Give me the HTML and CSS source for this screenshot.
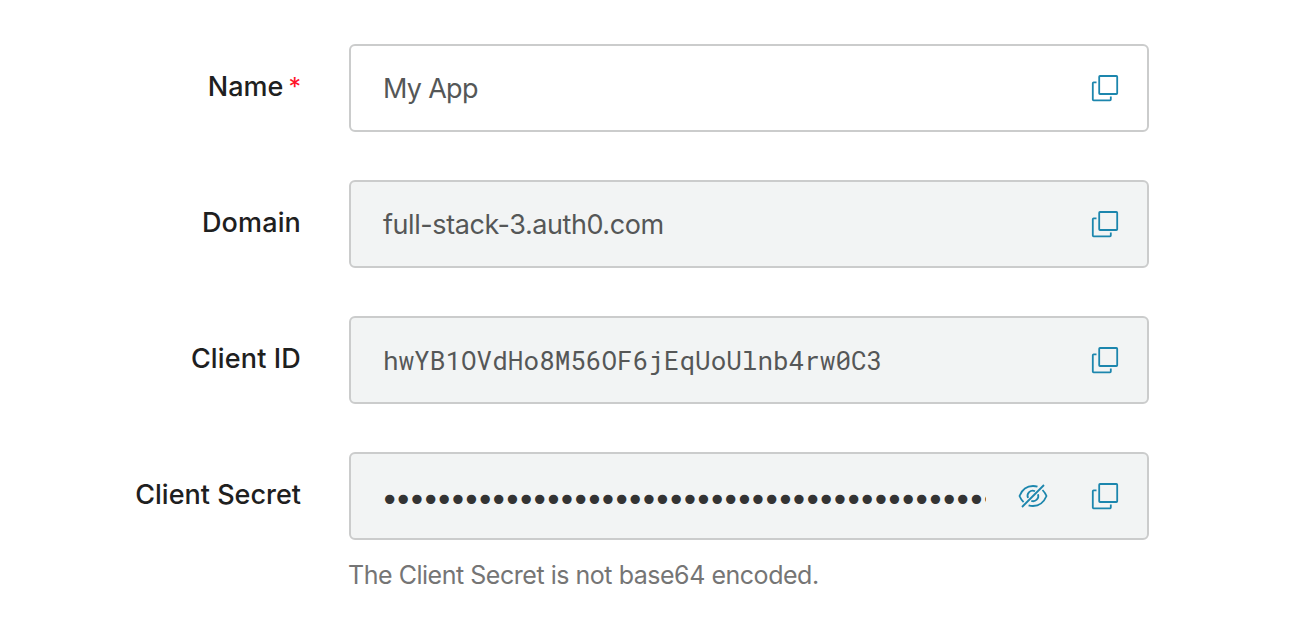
FILE: index.html
```html
<!DOCTYPE html>
<html lang="en">
<head>
<meta charset="utf-8">
<title>Application settings</title>
<link rel="stylesheet" href="styles.css">
</head>
<body>
<svg class="defs" aria-hidden="true">
  <symbol id="copy" viewBox="0 0 28 28">
    <rect x="8.2" y="1" width="18" height="18" rx=".8"/>
    <path d="M5.5 7.4H2.6Q1.8 7.4 1.8 8.2V24.5Q1.8 25.3 2.6 25.3H19Q19.8 25.3 19.8 24.5V21.6"/>
  </symbol>
  <symbol id="hide" viewBox="0 0 30 26">
    <path d="M4 24 26 2M19.5 3.7Q17.4 3 15 3C8.5 3 3.9 7 1.5 13Q2.8 16.3 5.6 19.1M24.5 7Q27.2 9.8 28.5 13C26 19 21.5 23 15 23Q12.7 23 10.6 22.3M17 8.2A5.2 5.2 0 0 0 10 15M20 11.3A5.2 5.2 0 0 1 13.3 17.9"/>
  </symbol>
</svg>
<form class="form">
  <div class="row">
    <label class="label name">Name<span class="required">*</span></label>
    <div class="field editable"><span class="value short">My App</span><svg class="copy"><use href="#copy"/></svg></div>
  </div>
  <div class="row">
    <label class="label wide">Domain</label>
    <div class="field"><span class="value">full-stack-3.auth0.com</span><svg class="copy"><use href="#copy"/></svg></div>
  </div>
  <div class="row">
    <label class="label wide">Client ID</label>
    <div class="field"><span class="value mono">hwYB1OVdHo8M56OF6jEqUoUlnb4rw0C3</span><svg class="copy"><use href="#copy"/></svg></div>
  </div>
  <div class="row">
    <label class="label">Client Secret</label>
    <div class="field"><span class="value secret">•••••••••••••••••••••••••••••••••••••••••••••</span><svg class="hide"><use href="#hide"/></svg><svg class="copy"><use href="#copy"/></svg></div>
  </div>
  <p class="hint">The Client Secret is not base64 encoded.</p>
</form>
</body>
</html>
```
FILE: styles.css
```css
* { box-sizing: border-box; }
body { margin: 0; background: #fff; font-family: Inter, "Liberation Sans", sans-serif; }
.defs { display: none; }
.form { padding-top: 44px; }
.row { display: flex; height: 88px; margin-bottom: 48px; }
.label { width: 301px; margin-right: 48px; text-align: right; font-size: 27px; line-height: 86px; font-weight: 500; color: #1e2020; white-space: nowrap; }
.wide { letter-spacing: .15px; }
.required { color: #ff1428; margin-left: 5px; font-size: 25px; font-weight: 400; }
.field { width: 800px; height: 88px; display: flex; align-items: center; padding: 1px 28px 0 32px; border: 2px solid #cbcccc; border-radius: 6px; background: #f2f4f4; }
.editable { background: #fff; }
.value { flex: 1; font-size: 27px; line-height: 42px; letter-spacing: -.43px; color: #555757; white-space: nowrap; }
.short { letter-spacing: -.7px; }
.mono { font-family: "Roboto Mono", "DejaVu Sans Mono", monospace; font-size: 26px; line-height: 40px; letter-spacing: 0; padding-bottom: 2px; }
.secret { flex: 0 0 603px; padding-top: 6px; overflow: hidden; font-family: "DejaVu Sans", sans-serif; font-size: 32px; letter-spacing: -5.23px; text-indent: -2.8px; color: #333; }
.copy { width: 28px; height: 28px; flex: none; margin-left: auto; }
.hide { width: 30px; height: 26px; flex: none; margin: 0 0 2px 32px; }
.copy, .hide { fill: none; stroke: #1c86ad; stroke-width: 1.8; }
.hint { margin: -29px 0 0 348px; font-size: 25px; line-height: 32px; letter-spacing: -.47px; color: #757575; }
```
